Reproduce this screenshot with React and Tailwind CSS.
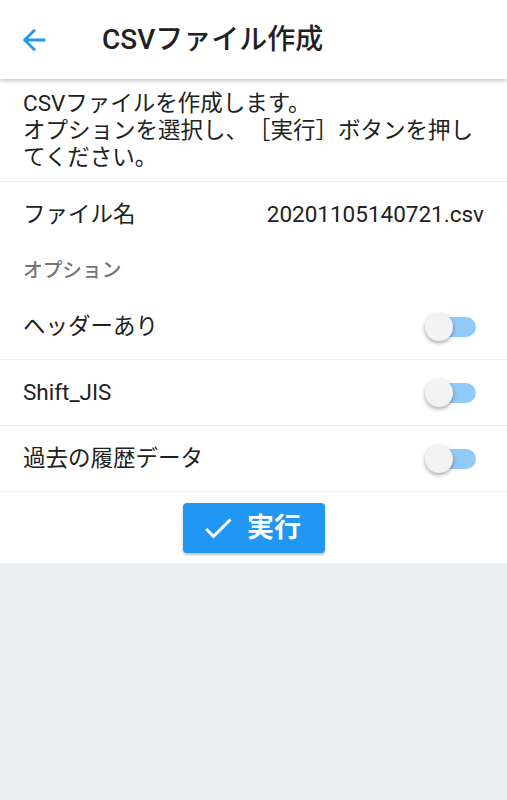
import React from "react";

function Toggle() {
  return (
    <div className="relative w-[51px] h-[28px]">
      <div className="absolute left-[3px] top-[4px] w-[48px] h-[20px] rounded-full bg-[#90caf9]" />
      <div className="absolute left-0 top-0 w-[28px] h-[28px] rounded-full bg-[#f3f3f3] shadow-[0_2px_4px_rgba(0,0,0,0.35)]" />
    </div>
  );
}

function ToggleRow({ label }) {
  return (
    <div className="flex items-center justify-between h-[66px] pl-[23px] pr-[31px] border-b border-[#efefef]">
      <span className="text-[22.5px] text-[#212121]">{label}</span>
      <Toggle />
    </div>
  );
}

export default function App() {
  return (
    <div className="min-h-[800px] bg-[#eceff1] font-['Roboto','Noto_Sans_CJK_JP',sans-serif] [text-spacing-trim:space-all]">
      <header className="relative z-10 h-[79px] bg-white flex items-center shadow-[0_2px_4px_rgba(0,0,0,0.22)]">
        <div className="ml-[17px] w-[34px] h-[34px] flex items-center justify-center">
          <svg viewBox="0 0 24 24" width="34" height="34" fill="#2196f3">
            <path d="M20 11H7.83l5.59-5.59L12 4l-8 8 8 8 1.41-1.41L7.83 13H20v-2z" />
          </svg>
        </div>
        <h1 className="ml-[51px] text-[28px] font-medium text-[#1f2124]">CSVファイル作成</h1>
      </header>
      <div className="bg-white">
        <p className="h-[103px] px-[23px] pt-[11px] text-[22.5px] leading-[27px] text-[#212121] border-b border-[#efefef]">
          CSVファイルを作成します。
          <br />
          オプションを選択し、［実行］ボタンを押してください。
        </p>
        <div className="flex items-center justify-between h-[65px] px-[23px]">
          <span className="text-[22.5px] text-[#212121]">ファイル名</span>
          <span className="text-[22.5px] text-[#212121]">20201105140721.csv</span>
        </div>
        <div className="flex items-center h-[47px] px-[23px]">
          <span className="text-[19.7px] font-medium text-[#757575]">オプション</span>
        </div>
        <ToggleRow label="ヘッダーあり" />
        <ToggleRow label="Shift_JIS" />
        <ToggleRow label="過去の履歴データ" />
        <div className="h-[71px] flex justify-center pt-[11px]">
          <button className="w-[142px] h-[50px] rounded-[4px] bg-[#2196f3] text-white flex items-center justify-center gap-[11px] pr-[6px] shadow-[0_2px_3px_rgba(0,0,0,0.25)]">
            <svg viewBox="0 0 24 24" width="36" height="36" fill="#ffffff">
              <path d="M9 16.17L4.83 12l-1.42 1.41L9 19 21 7l-1.41-1.41z" />
            </svg>
            <span className="text-[27px] font-bold leading-none">実行</span>
          </button>
        </div>
      </div>
    </div>
  );
}
